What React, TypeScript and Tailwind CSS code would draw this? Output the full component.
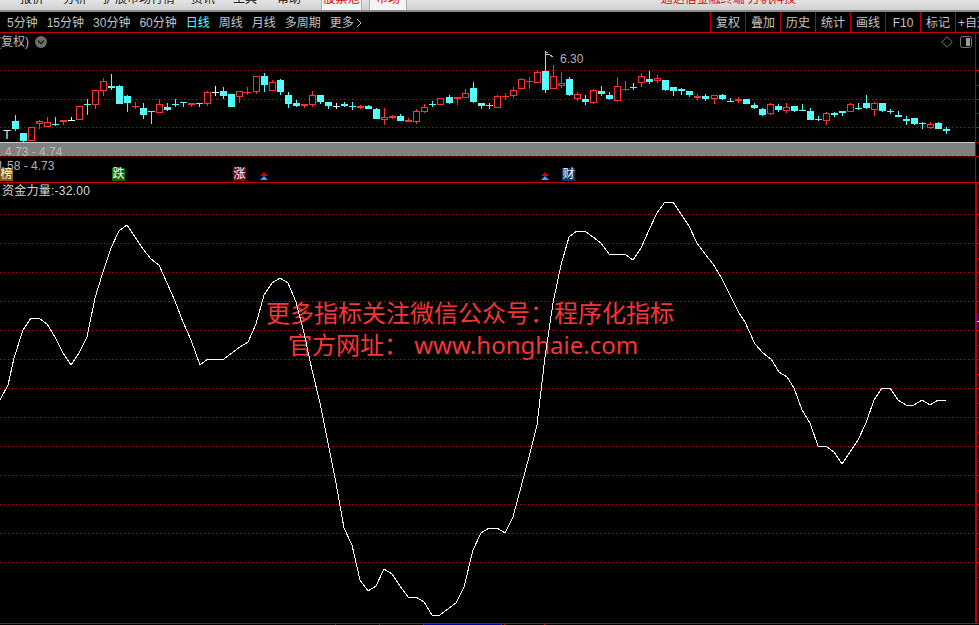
const FONT = '"Liberation Sans", "Noto Sans CJK SC", sans-serif';

type Row = [number, string, number, number, number, number];

const CANDLES_A: Row[] = [
  [46, 'c', 183, 207, 165, 213], [70, 'c', 219, 243, 219, 247], [94, 'r', 202, 242, 202, 242], [118, 'r', 184, 191, 180, 207],
  [142, 'r', 187, 200, 172, 202], [166, 'c', 192, 195, 172, 198], [190, 'r', 181, 185, 181, 195], [214, 'w', 181, 183, 172, 183],
  [238, 'r', 139, 179, 139, 179], [262, 'c', 131, 134, 118, 165], [286, 'r', 91, 134, 91, 147], [310, 'r', 64, 92, 54, 108],
  [334, 'c', 78, 83, 42, 90], [358, 'c', 78, 132, 75, 132], [382, 'c', 108, 129, 105, 156], [406, 'r', 138, 141, 127, 147],
  [430, 'c', 144, 165, 129, 177], [454, 'c', 153, 156, 153, 192], [478, 'r', 133, 158, 118, 158], [502, 'c', 141, 150, 129, 153],
  [526, 'c', 132, 136, 117, 141], [550, 'c', 126, 130, 126, 141], [574, 'r', 130, 136, 130, 141], [598, 'c', 129, 133, 129, 141],
  [622, 'r', 97, 131, 94, 138], [646, 'w', 96, 98, 78, 108], [670, 'c', 93, 108, 81, 117], [694, 'c', 102, 141, 102, 141],
  [718, 'r', 93, 110, 93, 129], [742, 'r', 96, 100, 81, 105], [769, 'r', 49, 95, 49, 102], [793, 'c', 48, 75, 39, 96],
  [817, 'r', 67, 93, 60, 93], [841, 'c', 60, 96, 57, 105], [865, 'c', 105, 132, 96, 144], [889, 'c', 129, 137, 120, 141],
  [913, 'r', 132, 137, 132, 144], [937, 'r', 105, 134, 93, 141], [961, 'c', 105, 126, 105, 132], [985, 'c', 126, 137, 126, 147],
];

const CANDLES_B: Row[] = [
  [18, 'w', 182, 184, 174, 192], [43, 'c', 176, 182, 170, 186], [67, 'c', 184, 186, 171, 195], [91, 'r', 183, 188, 180, 192],
  [115, 'c', 183, 191, 180, 191], [139, 'c', 192, 222, 189, 222], [163, 'r', 216, 225, 189, 240], [187, 'r', 213, 220, 210, 222],
  [211, 'c', 213, 228, 207, 228], [235, 'r', 226, 230, 219, 231], [259, 'r', 198, 231, 192, 237], [283, 'r', 187, 201, 177, 204],
  [307, 'c', 177, 179, 168, 186], [331, 'r', 160, 179, 160, 179], [358, 'c', 156, 174, 150, 177], [382, 'r', 157, 163, 157, 180],
  [406, 'r', 145, 158, 132, 160], [430, 'c', 129, 171, 111, 174], [454, 'c', 174, 182, 174, 192], [478, 'c', 181, 183, 174, 192],
  [502, 'r', 154, 188, 150, 189], [526, 'r', 153, 155, 144, 165], [550, 'r', 135, 152, 126, 159], [574, 'r', 102, 131, 99, 135],
  [598, 'r', 108, 112, 96, 132], [622, 'r', 81, 113, 78, 114], [646, 'c', 78, 135, 30, 144], [670, 'r', 93, 131, 60, 132],
  [694, 'r', 114, 124, 81, 129], [718, 'c', 102, 150, 96, 153], [742, 'r', 147, 163, 141, 168], [766, 'c', 162, 170, 150, 180],
  [790, 'r', 135, 174, 132, 176], [814, 'c', 138, 147, 123, 153], [838, 'c', 150, 162, 141, 165], [862, 'r', 123, 168, 96, 171],
  [886, 'r', 132, 136, 108, 138], [910, 'c', 126, 128, 114, 135], [934, 'r', 93, 113, 84, 126], [958, 'c', 102, 110, 78, 117],
];

const CANDLES_C: Row[] = [
  [22, 'r', 54, 62, 45, 69], [46, 'c', 60, 90, 60, 93], [70, 'c', 81, 93, 81, 108], [94, 'c', 87, 92, 84, 105],
  [118, 'c', 93, 105, 93, 111], [142, 'r', 108, 113, 102, 119], [166, 'c', 108, 117, 102, 123], [193, 'r', 105, 117, 105, 132],
  [217, 'c', 105, 117, 102, 120], [241, 'c', 124, 126, 114, 126], [265, 'r', 117, 122, 111, 129], [289, 'c', 117, 132, 117, 132],
  [313, 'c', 135, 144, 129, 147], [337, 'c', 147, 165, 144, 168], [361, 'r', 132, 162, 129, 165], [385, 'c', 138, 150, 132, 156],
  [409, 'r', 141, 152, 129, 159], [433, 'c', 138, 153, 138, 156], [457, 'c', 150, 153, 132, 153], [481, 'c', 153, 180, 144, 180],
  [505, 'c', 176, 178, 168, 183], [529, 'r', 159, 183, 156, 195], [553, 'c', 159, 165, 156, 171], [577, 'c', 153, 159, 153, 168],
  [601, 'r', 132, 156, 129, 156], [625, 'c', 144, 147, 129, 150], [649, 'c', 129, 144, 105, 147], [673, 'r', 129, 150, 126, 168],
  [697, 'c', 129, 153, 129, 156], [721, 'c', 154, 157, 147, 162], [745, 'c', 165, 171, 153, 171], [769, 'c', 177, 183, 168, 195],
  [793, 'c', 174, 192, 174, 195], [817, 'c', 190, 192, 186, 207], [841, 'r', 192, 204, 186, 207], [865, 'c', 189, 207, 186, 207],
  [889, 'c', 207, 213, 201, 222],
];

const LINE = [
  [0, 400], [8, 385], [14, 358], [23, 330], [31, 318], [39, 318], [47, 324], [55, 337], [63, 353], [71, 365], [79, 353], [87, 337],
  [95, 298], [103, 272], [111, 248], [119, 231], [127, 225], [135, 237], [143, 249], [151, 259], [159, 265], [167, 283], [175, 301],
  [183, 322], [191, 340], [200, 365], [208, 359], [224, 359], [232, 353], [240, 347], [248, 342], [256, 324], [264, 295], [272, 283],
  [280, 278], [288, 283], [296, 302], [304, 333], [312, 370], [320, 403], [328, 443], [336, 483], [344, 528], [352, 545], [360, 580],
  [368, 591], [376, 586], [384, 569], [392, 574], [400, 586], [408, 597], [416, 597], [424, 602], [432, 615], [440, 615], [448, 609],
  [456, 603], [464, 587], [473, 550], [481, 533], [489, 528], [497, 528], [505, 533], [513, 517], [521, 487], [529, 457], [537, 425],
  [545, 357], [553, 303], [561, 265], [569, 237], [577, 231], [585, 231], [593, 237], [601, 243], [609, 254], [625, 254], [633, 260],
  [641, 248], [649, 230], [657, 213], [665, 202], [673, 202], [681, 214], [689, 226], [697, 243], [705, 254], [713, 264], [721, 277],
  [729, 293], [739, 313], [745, 322], [755, 344], [763, 353], [771, 359], [779, 372], [787, 377], [794, 388], [802, 410], [810, 423],
  [818, 446], [826, 446], [834, 452], [842, 464], [850, 452], [858, 440], [866, 423], [874, 400], [882, 388], [890, 388], [898, 400],
  [906, 405], [914, 405], [922, 400], [930, 405], [938, 400], [946, 400],
];

const MENU = [
  { label: '报价', cls: 'ml-[20px]' },
  { label: '分析', cls: 'ml-[19px]' },
  { label: '扩展市场行情', cls: 'ml-[16px]' },
  { label: '资讯', cls: 'ml-[16px]' },
  { label: '工具', cls: 'ml-[18px]' },
  { label: '帮助', cls: 'ml-[20px]' },
];

const PERIODS = ['5分钟', '15分钟', '30分钟', '60分钟', '日线', '周线', '月线', '多周期'];
const TOOLS = ['复权', '叠加', '历史', '统计', '画线', 'F10', '标记'];

function Candles({ rows, ox, oy }: { rows: Row[]; ox: number; oy: number }) {
  return (
    <>
      {rows.map(([zx, kind, bodyTop, bodyBot, wickTop, wickBot]) => {
        const x = Math.floor(ox + zx / 3);
        const top = Math.round(oy + bodyTop / 3);
        const bot = Math.max(top + 1, Math.round(oy + bodyBot / 3));
        const wt = Math.round(oy + wickTop / 3);
        const wb = Math.round(oy + wickBot / 3);
        const color = kind === 'r' ? '#ff3232' : kind === 'w' ? '#ffffff' : '#54fcfc';
        return (
          <g key={zx}>
            <rect x={x} y={wt} width={1} height={Math.max(1, wb - wt)} fill={color} />
            {kind === 'r' ? (
              <rect x={x - 3} y={top} width={7} height={bot - top} fill={bot - top > 2 ? '#000' : color} stroke="none" />
            ) : (
              <rect x={x - 3} y={top} width={7} height={bot - top} fill={color} />
            )}
            {kind === 'r' && bot - top > 2 && (
              <rect x={x - 2.5} y={top + 0.5} width={6} height={bot - top - 1} fill="none" stroke={color} />
            )}
          </g>
        );
      })}
    </>
  );
}

function DotLine({ y, x2 = 975 }: { y: number; x2?: number }) {
  return <line x1={0} x2={x2} y1={y + 0.5} y2={y + 0.5} stroke="#c00000" strokeDasharray="1 3" />;
}

function Badge({ text, cls }: { text: string; cls: string }) {
  return (
    <span className={`absolute top-[12px] w-[13px] h-[13px] text-[12px] leading-[13px] text-center text-white ${cls}`}>
      {text}
    </span>
  );
}

function DoubleArrow({ cls }: { cls: string }) {
  return (
    <svg className={`absolute top-[16px] ${cls}`} width="8" height="8" viewBox="0 0 8 8">
      <path d="M4 0 L8 4 L0 4 Z" fill="#d00000" />
      <path d="M4 4 L8 8 L0 8 Z" fill="#40a0ff" />
    </svg>
  );
}

export default function App() {
  const gridLower = Array.from({ length: 13 }, (_, i) => 214 + i * 29);
  return (
    <div className="w-[979px] h-[625px] bg-black flex flex-col overflow-hidden" style={{ fontFamily: FONT }}>
      {/* menu bar, cut off at the top of the window */}
      <div className="h-[12px] shrink-0 overflow-hidden bg-gradient-to-b from-[#e4e4e4] to-[#cfcfcf] border-b-2 border-[#8a8a8a] flex items-start text-[12px] leading-[12px] text-[#222]">
        <div className="flex items-start -mt-[7px]">
          {MENU.map((m) => (
            <span key={m.label} className={m.cls}>{m.label}</span>
          ))}
        </div>
        <div className="ml-[20px] w-[41px] h-[10px] bg-[#f4f4f4] border-x border-[#aaa] overflow-hidden text-center text-[#e00000]">
          <div className="-mt-[7px]">股票池</div>
        </div>
        <div className="ml-[7px] w-[38px] h-[10px] bg-[#f4f4f4] border-x border-[#aaa] overflow-hidden text-center text-[#e00000]">
          <div className="-mt-[7px]">市场</div>
        </div>
        <div className="ml-auto mr-[183px] -mt-[7px] text-[#e00000] whitespace-nowrap">通达信金融终端 方帆科技</div>
      </div>

      {/* period toolbar */}
      <div className="h-[21px] shrink-0 border-b border-[#c00000] flex items-stretch text-[12px] text-[#c4c4c4]">
        <div className="flex items-center gap-[9px] pl-[7px] pt-[1px] flex-1">
          {PERIODS.map((p) => (
            <span key={p} className={p === '日线' ? 'text-[#55ffff]' : ''}>{p}</span>
          ))}
          <span className="flex items-center gap-[2px]">
            更多
            <svg width="6" height="10" viewBox="0 0 6 10">
              <path d="M1 1 L5 5 L1 9" fill="none" stroke="#c4c4c4" />
            </svg>
          </span>
        </div>
        <div className="flex items-stretch">
          {TOOLS.map((t) => (
            <span key={t} className="w-[35px] border-l border-[#c00000] flex items-center justify-center pt-[1px]">{t}</span>
          ))}
          <span className="w-[24px] border-l border-[#c00000] flex items-center pl-[2px] pt-[1px] overflow-hidden whitespace-nowrap">+自选</span>
        </div>
      </div>

      <div className="flex-1 flex min-h-0">
        <div className="w-[975px] flex flex-col">
          {/* info row */}
          <div className="h-[18px] shrink-0 flex items-center justify-between text-[12px] text-[#bbb]">
            <div className="flex items-center -ml-[3px]">
              <span>(复权)</span>
              <svg className="ml-[6px]" width="12" height="12" viewBox="0 0 12 12">
                <circle cx="6" cy="6" r="6" fill="#6c6c6c" />
                <path d="M3 4.5 L6 7.5 L9 4.5" fill="none" stroke="#1c1c1c" strokeWidth="1.4" />
              </svg>
            </div>
            <div className="flex items-center gap-[7px] pr-[3px]">
              <svg width="12" height="12" viewBox="0 0 12 12">
                <path d="M6 0.7 L11.3 6 L6 11.3 L0.7 6 Z" fill="none" stroke="#777" />
              </svg>
              <svg width="12" height="12" viewBox="0 0 12 12">
                <rect x="0.5" y="0.5" width="11" height="11" rx="2" fill="none" stroke="#777" />
                <rect x="6" y="2" width="4" height="8" fill="#999" />
              </svg>
            </div>
          </div>

          {/* candlesticks */}
          <svg className="block shrink-0" width="975" height="91" viewBox="0 51 975 91" shapeRendering="crispEdges">
            <DotLine y={70} />
            <DotLine y={99} />
            <DotLine y={127} />
            <Candles rows={CANDLES_A} ox={0} oy={60} />
            <Candles rows={CANDLES_B} ox={330} oy={45} />
            <Candles rows={CANDLES_C} ox={650} oy={60} />
            <path d="M545 51 L545 55 M545 52 L548 52 M546 55 L549 54 L553 57" fill="none" stroke="#c8c8c8" />
            <text x="560" y="63" fontSize="12" fill="#b4b4b4" shapeRendering="auto">6.30</text>
            <text x="3" y="139" fontSize="13" fill="#e0e0e0" shapeRendering="auto">T</text>
          </svg>

          {/* scroll bar with price range */}
          <div className="h-[14px] shrink-0 bg-[#808080] border-t border-[#c8c8c8] text-[12px] leading-[14px] text-[#b8b8b8] pl-[5px] pt-[2px]">
            4.73 - 4.74
          </div>

          {/* signal strip */}
          <div className="h-[27px] shrink-0 relative border-b border-[#c00000]">
            <svg className="absolute top-0 left-0" width="975" height="1" viewBox="0 156 975 1">
              <DotLine y={156} />
            </svg>
            <span className="absolute left-[-3px] top-[3px] text-[12px] leading-[14px] text-[#b4b4b4] whitespace-nowrap">
              1.58 - 4.73
            </span>
            <Badge text="榜" cls="left-0 bg-[#8a5a14]" />
            <Badge text="跌" cls="left-[112px] bg-[#0a6a0a]" />
            <Badge text="涨" cls="left-[233px] bg-[#7a0c0c]" />
            <DoubleArrow cls="left-[260px]" />
            <DoubleArrow cls="left-[541px]" />
            <Badge text="财" cls="left-[562px] bg-[#0c3a6c]" />
          </div>

          {/* fund flow indicator */}
          <div className="flex-1 relative min-h-0">
            <span className="absolute left-[2px] top-[1px] text-[12px] leading-[14px] tracking-[0.25px] text-[#d8d8d8] whitespace-nowrap">资金力量:-32.00</span>
            <div
              className="absolute left-[266px] top-[114px] text-[24px] leading-[32px] text-[#f83535] whitespace-nowrap"
              style={{ fontFamily: '"Noto Sans", "Noto Sans CJK SC", sans-serif' }}
            >
              <div>更多指标关注微信公众号：程序化指标</div>
              <div className="ml-[22px]">官方网址： www.honghaie.com</div>
            </div>
            <svg className="block relative" width="975" height="442" viewBox="0 183 975 442" shapeRendering="crispEdges">
              {gridLower.map((y) => (
                <DotLine key={y} y={y} />
              ))}
              <polyline points={LINE.map((p) => p.join(',')).join(' ')} fill="none" stroke="#ffffff" />
              <rect x="0" y="623" width="975" height="1" fill="#c00000" />
              <rect x="423" y="624" width="78" height="1" fill="#0000a8" />
              {[335, 379, 423, 501, 504, 544].map((x) => (
                <rect key={x} x={x} y="624" width="1" height="1" fill="#c00000" />
              ))}
            </svg>
          </div>
        </div>

        {/* right axis */}
        <svg className="block shrink-0" width="4" height="592" viewBox="975 33 4 592" shapeRendering="crispEdges">
          <rect x="975" y="33" width="1" height="149" fill="#c00000" />
          <rect x="975" y="182" width="2" height="442" fill="#c00000" />
          {[70, 99, 127, 156, 182, 623].map((y) => (
            <rect key={y} x="976" y={y} width="3" height="1" fill="#c00000" />
          ))}
          {[85, 113, 142].map((y) => (
            <rect key={y} x="977" y={y} width="2" height="1" fill="#c00000" />
          ))}
          {gridLower.map((y) => (
            <g key={y}>
              <rect x="977" y={y} width="2" height="1" fill="#c00000" />
              <rect x="978" y={y + 15} width="1" height="1" fill="#c00000" />
            </g>
          ))}
          <rect x="977" y="313" width="2" height="17" fill="#0000a8" />
          <rect x="977" y="321" width="2" height="1" fill="#ffffff" />
        </svg>
      </div>
    </div>
  );
}
